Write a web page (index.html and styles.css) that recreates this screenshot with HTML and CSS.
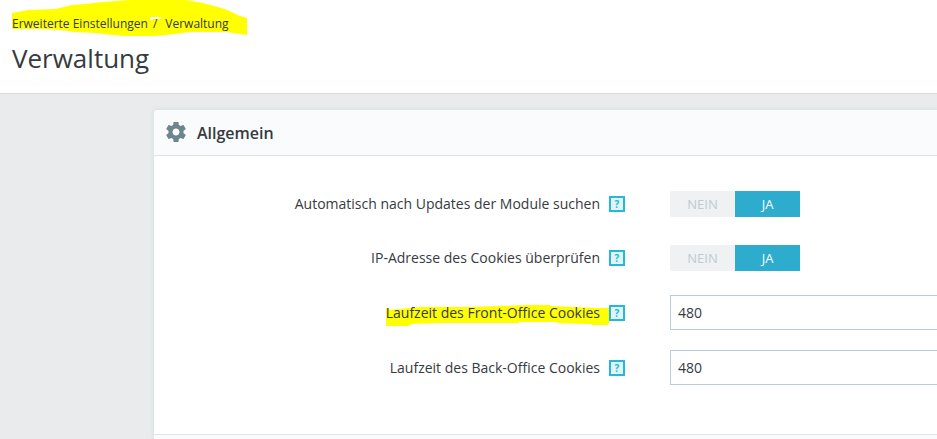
FILE: index.html
```html
<!DOCTYPE html>
<html lang="de">
<head>
<meta charset="utf-8">
<title>Verwaltung</title>
<link rel="stylesheet" href="styles.css">
</head>
<body>

<header class="page-head">
  <nav class="breadcrumb">
    <svg class="marker marker-breadcrumb" width="235" height="36" viewBox="0 0 235 36" aria-hidden="true">
      <path d="M0 13L16 10L43 9L60 5L73 4L91 2L119 0H174L191 3L213 9L228 16L235 18V35L214 32H178L163 34L143 36H112L101 35L83 33L63 32L48 30L28 29H0ZM138 17V20H141V19H149V17Z" fill="#ff0" fill-rule="evenodd"/>
    </svg>
    <a href="#">Erweiterte Einstellungen</a>
    <span class="separator">/</span>
    <a href="#">Verwaltung</a>
  </nav>
  <h1 class="page-title">Verwaltung</h1>
</header>

<main class="content">
  <form class="card">
    <h2 class="card-header">
      <svg class="gear" width="24" height="24" viewBox="0 0 24 24" aria-hidden="true">
        <path fill="#6c868e" d="M19.43 11.98c.04-.32.07-.64.07-.98s-.03-.66-.07-.98l2.11-1.65c.19-.15.24-.42.12-.64l-2-3.46c-.12-.22-.39-.3-.61-.22l-2.49 1c-.52-.4-1.08-.73-1.69-.98l-.38-2.65C14.46 1.18 14.25 1 14 1h-4c-.25 0-.46.18-.49.42l-.38 2.65c-.61.25-1.17.59-1.69.98l-2.49-1c-.23-.09-.49 0-.61.22l-2 3.46c-.13.22-.07.49.12.64l2.11 1.65c-.04.32-.07.65-.07.98s.03.66.07.98l-2.11 1.65c-.19.15-.24.42-.12.64l2 3.46c.12.22.39.3.61.22l2.49-1c.52.4 1.08.73 1.69.98l.38 2.65c.03.24.24.42.49.42h4c.25 0 .46-.18.49-.42l.38-2.65c.61-.25 1.17-.59 1.69-.98l2.49 1c.23.09.49 0 .61-.22l2-3.46c.12-.22.07-.49-.12-.64l-2.11-1.65zM12 14.5c-1.93 0-3.5-1.57-3.5-3.5s1.57-3.5 3.5-3.5 3.5 1.57 3.5 3.5-1.57 3.5-3.5 3.5z"/>
      </svg>
      Allgemein
    </h2>

    <div class="card-body">
      <div class="form-row" role="group" aria-labelledby="updates-label">
        <div class="label-col">
          <span id="updates-label">Automatisch nach Updates der Module suchen</span>
          <button type="button" class="help">?</button>
        </div>
        <div class="switch">
          <input type="radio" name="updates" id="updates-off">
          <label for="updates-off">NEIN</label>
          <input type="radio" name="updates" id="updates-on" checked>
          <label for="updates-on">JA</label>
        </div>
      </div>

      <div class="form-row" role="group" aria-labelledby="ip-label">
        <div class="label-col">
          <span id="ip-label">IP-Adresse des Cookies überprüfen</span>
          <button type="button" class="help">?</button>
        </div>
        <div class="switch">
          <input type="radio" name="ip" id="ip-off">
          <label for="ip-off">NEIN</label>
          <input type="radio" name="ip" id="ip-on" checked>
          <label for="ip-on">JA</label>
        </div>
      </div>

      <div class="form-row">
        <div class="label-col">
          <label class="marked" for="front-cookie">
            <svg class="marker marker-label" width="223" height="21" viewBox="0 0 223 21" aria-hidden="true">
              <path d="M0 3H3V5L35 2H85L144 0H164V1L209 3H223V19L221 20H207L204 19L171 18V17H133V18L52 18L26 19L22 21H0Z" fill="#ff0"/>
            </svg>
            <span class="marked-text">Laufzeit des Front-Office Cookies</span>
          </label>
          <button type="button" class="help">?</button>
        </div>
        <input type="text" class="text-input" id="front-cookie" value="480">
      </div>

      <div class="form-row">
        <div class="label-col">
          <label for="back-cookie">Laufzeit des Back-Office Cookies</label>
          <button type="button" class="help">?</button>
        </div>
        <input type="text" class="text-input" id="back-cookie" value="480">
      </div>
    </div>

    <div class="card-footer"></div>
  </form>
</main>

</body>
</html>
```
FILE: styles.css
```css
* {
  box-sizing: border-box;
}

body {
  margin: 0;
  min-height: 100vh;
  display: flex;
  flex-direction: column;
  background: #e9ebec;
  color: #363a41;
  font-family: "Open Sans", sans-serif;
  font-size: 14px;
  line-height: 20px;
  overflow: hidden;
}

.page-head {
  padding: 14px 12px 16px;
  background: #fff;
  border-bottom: 1px solid #dadddd;
}

.breadcrumb {
  position: relative;
  display: flex;
  font-size: 12px;
}

.breadcrumb a {
  position: relative;
  color: #363a41;
  text-decoration: none;
}

.separator {
  position: relative;
  margin: 0 8px 0 5px;
}

/* yellow highlighter strokes, drawn behind the text */
.marker {
  position: absolute;
}

.marker-breadcrumb {
  left: 0;
  top: -14px;
}

.marker-label {
  left: 0;
  top: 2px;
}

.page-title {
  margin: 6px 0 0;
  font-size: 26px;
  font-weight: 400;
  line-height: 37px;
}

.content {
  flex: 1;
  display: flex;
  padding: 16px 0 0 154px;
}

.card {
  flex: 1;
  display: flex;
  flex-direction: column;
  background: #fff;
  border-radius: 4px 0 0 0;
  box-shadow: 0 0 4px 0 #cfdddf;
}

.card-header {
  display: flex;
  align-items: center;
  gap: 9px;
  margin: 0;
  padding: 0 10px;
  height: 46px;
  background: #fafbfc;
  border-bottom: 1px solid #dbe6e9;
  border-radius: 4px 0 0 0;
  font-size: 16px;
  font-weight: 600;
}

.card-body {
  display: flex;
  flex-direction: column;
  gap: 20px;
  padding: 31px 0 49px;
}

.form-row {
  display: grid;
  grid-template-columns: 471px 1fr;
  column-gap: 45px;
  align-items: center;
  min-height: 34px;
}

.label-col {
  display: flex;
  justify-content: flex-end;
  align-items: center;
  gap: 9px;
}

.marked,
.marked-text {
  position: relative;
}

.help {
  width: 16px;
  height: 16px;
  padding: 0;
  border: 2px solid #25b9d7;
  background: #dff5f9;
  color: #25b9d7;
  font: 700 10px/12px "Open Sans", sans-serif;
}

.switch {
  display: flex;
  width: 130px;
  height: 26px;
  border-radius: 2px 0 0 2px;
  overflow: hidden;
}

.switch input {
  position: absolute;
  opacity: 0;
}

.switch label {
  flex: 1;
  background: #eff1f2;
  color: #bbcdd2;
  font-size: 13px;
  line-height: 26px;
  text-align: center;
}

.switch input:checked + label {
  background: #2eacce;
  color: #fff;
}

.text-input {
  width: 100%;
  height: 35px;
  padding: 0 7px;
  border: 1px solid #bbcdd2;
  border-right: 0;
  border-radius: 0;
  background: #fff;
  color: #363a41;
  font: inherit;
}

.card-footer {
  flex: 1;
  background: #fafbfc;
  border-top: 1px solid #dbe6e9;
}
```
